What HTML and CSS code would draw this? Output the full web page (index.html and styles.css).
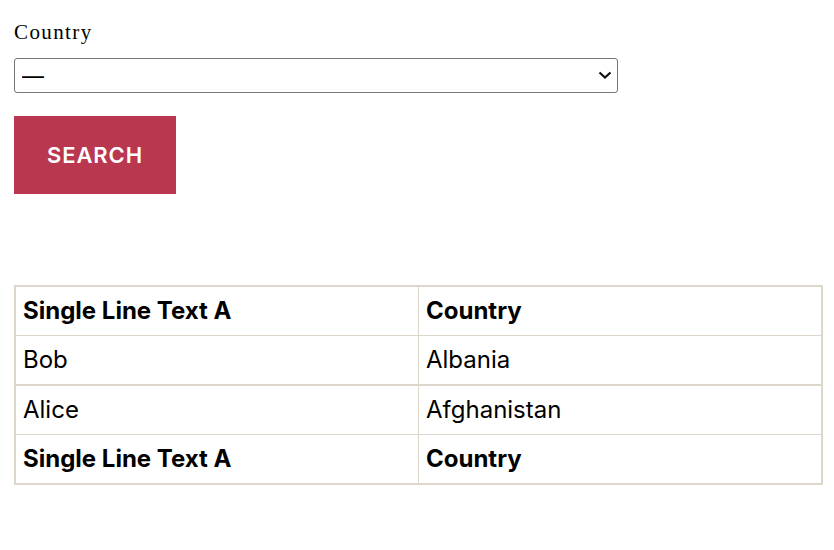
FILE: index.html
```html
<!DOCTYPE html>
<html lang="en">
<head>
  <meta charset="UTF-8" />
  <meta name="viewport" content="width=device-width, initial-scale=1.0"/>
  <title>Search</title>
  <link rel="stylesheet" href="styles.css">
</head>
<body>
  <form class="search-form" onsubmit="return false">
    <label class="field-label" for="country">Country</label>
    <div class="select-wrap">
      <select id="country" class="country-select">
        <option>—</option>
        <option>Afghanistan</option>
        <option>Albania</option>
      </select>
      <svg class="chevron" width="14" height="10" viewBox="0 0 14 10"><path d="M1.5 2.5 L7 7.5 L12.5 2.5" fill="none" stroke="#111" stroke-width="2.2"/></svg>
    </div>
    <button class="search-button" type="submit">Search</button>
  </form>

  <table class="results">
    <thead>
      <tr><th>Single Line Text A</th><th>Country</th></tr>
    </thead>
    <tbody>
      <tr><td>Bob</td><td>Albania</td></tr>
      <tr><td>Alice</td><td>Afghanistan</td></tr>
    </tbody>
    <tfoot>
      <tr><th>Single Line Text A</th><th>Country</th></tr>
    </tfoot>
  </table>
</body>
</html>
```

FILE: styles.css
```css
body {
  margin: 0;
  padding: 18px 14px;
  font-family: "Liberation Serif", serif;
  color: #000;
  background: #fff;
}
.search-form {
  display: flex;
  flex-direction: column;
  align-items: flex-start;
}
.field-label {
  font-size: 21px;
  letter-spacing: 1.4px;
  line-height: 28px;
  margin-bottom: 12px;
}
.select-wrap {
  position: relative;
  width: 604px;
}
.country-select {
  appearance: none;
  -webkit-appearance: none;
  width: 100%;
  height: 35px;
  margin: 0;
  padding: 0 30px 0 7px;
  border: 1px solid #767676;
  border-radius: 3px;
  background: #fff;
  font-family: "Inter", sans-serif;
  font-size: 22px;
  color: #000;
}
.chevron {
  position: absolute;
  right: 6px;
  top: 12px;
  pointer-events: none;
}
.search-button {
  margin-top: 23px;
  width: 162px;
  height: 78px;
  border: none;
  border-radius: 0;
  background: #b9374f;
  color: #fff;
  font-family: "Inter", sans-serif;
  font-weight: 600;
  font-size: 22px;
  letter-spacing: 0.9px;
  text-transform: uppercase;
  cursor: pointer;
}
.results {
  margin-top: 91px;
  width: 809px;
  border-collapse: collapse;
  border: 2px solid #dcd7ca;
  font-family: "Inter", sans-serif;
  font-size: 24px;
  table-layout: fixed;
}
.results th,
.results td {
  border: 1px solid #dcd7ca;
  padding: 9px 7px;
  line-height: 30px;
  text-align: left;
}
.results th {
  font-weight: 700;
}
.results tbody tr + tr td {
  border-top-width: 2px;
}
```
